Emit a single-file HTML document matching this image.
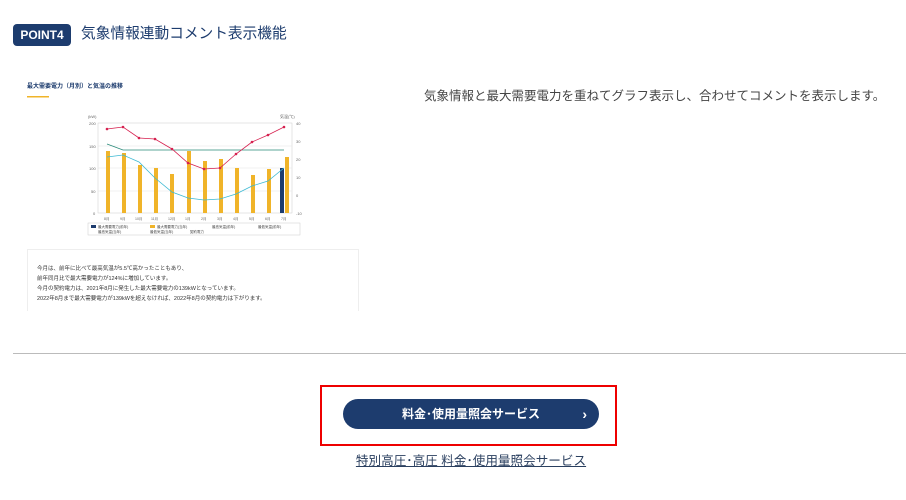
<!DOCTYPE html>
<html><head><meta charset="utf-8"><style>
*{margin:0;padding:0;box-sizing:border-box}
body{width:906px;height:500px;background:#fff;font-family:"Liberation Sans","Noto Sans CJK JP",sans-serif;position:relative;overflow:hidden;color:#333}
.badge{position:absolute;left:13px;top:24px;width:58px;height:22px;background:#1d3c6e;border-radius:4px;color:#fff;font-weight:bold;font-size:12px;line-height:22px;text-align:center}
.title{position:absolute;left:81px;top:23px;font-size:14.7px;color:#1d3c6e;line-height:22px}
.desc{position:absolute;left:424px;top:85px;font-size:12.5px;color:#444;white-space:nowrap}
.hr{position:absolute;left:13px;top:353px;width:893px;height:1px;background:#bbb}
.red{position:absolute;left:320px;top:385px;width:297px;height:61px;border:2px solid #e00}
.btn{position:absolute;left:343px;top:399px;width:256px;height:30px;background:#1d3c6e;border-radius:15px;color:#fff;font-weight:bold;font-size:12px;line-height:30px;text-align:center}
.btn span{position:absolute;right:12px;top:0;font-weight:bold;font-size:14px}
.link{position:absolute;left:0;width:942px;top:450px;text-align:center;font-size:12.6px;color:#2a3f5f;text-decoration:underline}
.box{position:absolute;left:27px;top:249px;width:332px;height:62px;border:1px solid #eee;border-bottom:none;font-size:5.5px;color:#333;padding:14px 0 0 9px;line-height:10px}
</style></head><body>
<div class="badge">POINT4</div>
<div class="title">気象情報連動コメント表示機能</div>
<div class="desc">気象情報と最大需要電力を重ねてグラフ表示し、合わせてコメントを表示します。</div>
<svg style="position:absolute;left:0;top:0" width="400" height="250">
<text x="27" y="88" font-size="6" font-weight="bold" fill="#1d3c6e">最大需要電力（月別）と気温の推移</text>
<rect x="27" y="96" width="22" height="1.5" fill="#f0b429"/>
<text x="88" y="118" font-size="4" fill="#666">(kW)</text>
<text x="280" y="118" font-size="4" fill="#666">気温(℃)</text>
<rect x="98" y="123" width="194" height="90" fill="none" stroke="#ccc" stroke-width="0.5"/>
<g stroke="#e4e4e4" stroke-width="0.5"><line x1="98" y1="146" x2="292" y2="146"/><line x1="98" y1="168" x2="292" y2="168"/><line x1="98" y1="191" x2="292" y2="191"/></g>
<g font-size="4" fill="#666"><text x="89" y="125">200</text><text x="89" y="148">150</text><text x="89" y="170">100</text><text x="91" y="193">50</text><text x="93" y="215">0</text>
<text x="296" y="125">40</text><text x="296" y="143">30</text><text x="296" y="161">20</text><text x="296" y="179">10</text><text x="296" y="197">0</text><text x="296" y="215">-10</text></g>
<g fill="#f0b429">
<rect x="106" y="151" width="4" height="62"/><rect x="122" y="153" width="4" height="60"/><rect x="138" y="165" width="4" height="48"/><rect x="154" y="168" width="4" height="45"/><rect x="170" y="174" width="4" height="39"/><rect x="187" y="151" width="4" height="62"/><rect x="203" y="161" width="4" height="52"/><rect x="219" y="159" width="4" height="54"/><rect x="235" y="168" width="4" height="45"/><rect x="251" y="175" width="4" height="38"/><rect x="267" y="169" width="4" height="44"/><rect x="285" y="157" width="4" height="56"/></g>
<rect x="280" y="168" width="4" height="45" fill="#1d3c6e"/>
<polyline fill="none" stroke="#2a8a7a" stroke-width="0.8" points="107,144 123,150 139,150 155,150 172,150 188,150 204,150 220,150 236,150 252,150 268,150 284,150"/>
<polyline fill="none" stroke="#d6204f" stroke-width="0.8" points="107,129 123,127 139,138 155,139 172,149 188,163 204,169 220,168 236,154 252,142 268,135 284,127"/>
<polyline fill="none" stroke="#3cb9d3" stroke-width="0.8" points="107,157 123,155 139,162 155,178 172,192 188,198 204,200 220,199 236,194 252,186 268,181 284,168"/>
<g fill="#d6204f"><circle cx="107" cy="129" r="1.3"/><circle cx="123" cy="127" r="1.3"/><circle cx="139" cy="138" r="1.3"/><circle cx="155" cy="139" r="1.3"/><circle cx="172" cy="149" r="1.3"/><circle cx="188" cy="163" r="1.3"/><circle cx="204" cy="169" r="1.3"/><circle cx="220" cy="168" r="1.3"/><circle cx="236" cy="154" r="1.3"/><circle cx="252" cy="142" r="1.3"/><circle cx="268" cy="135" r="1.3"/><circle cx="284" cy="127" r="1.3"/></g>
<g font-size="3.5" fill="#666"><text x="104" y="220">8月</text><text x="120" y="220">9月</text><text x="135" y="220">10月</text><text x="151" y="220">11月</text><text x="168" y="220">12月</text><text x="185" y="220">1月</text><text x="201" y="220">2月</text><text x="217" y="220">3月</text><text x="233" y="220">4月</text><text x="249" y="220">5月</text><text x="265" y="220">6月</text><text x="281" y="220">7月</text></g>
<rect x="88" y="223" width="212" height="12" fill="none" stroke="#ccc" stroke-width="0.5"/>
<g font-size="3.5" fill="#444"><rect x="91" y="225" width="5" height="3" fill="#1d3c6e"/><text x="98" y="228">最大需要電力(前年)</text>
<rect x="150" y="225" width="5" height="3" fill="#f0b429"/><text x="157" y="228">最大需要電力(当年)</text><text x="212" y="228">最高気温(前年)</text><text x="258" y="228">最低気温(前年)</text>
<text x="98" y="233">最高気温(当年)</text><text x="150" y="233">最低気温(当年)</text><text x="190" y="233">契約電力</text></g>
</svg>
<div class="box">今月は、前年に比べて最高気温が5.5℃高かったこともあり、<br>前年同月比で最大需要電力が124%に増加しています。<br><span style="display:block;height:0"></span>今月の契約電力は、2021年8月に発生した最大需要電力の139kWとなっています。<br>2022年8月まで最大需要電力が139kWを超えなければ、2022年8月の契約電力は下がります。</div>
<div class="hr"></div>
<div class="red"></div>
<div class="btn">料金･使用量照会サービス<span>›</span></div>
<div class="link">特別高圧･高圧 料金･使用量照会サービス</div>
</body></html>
